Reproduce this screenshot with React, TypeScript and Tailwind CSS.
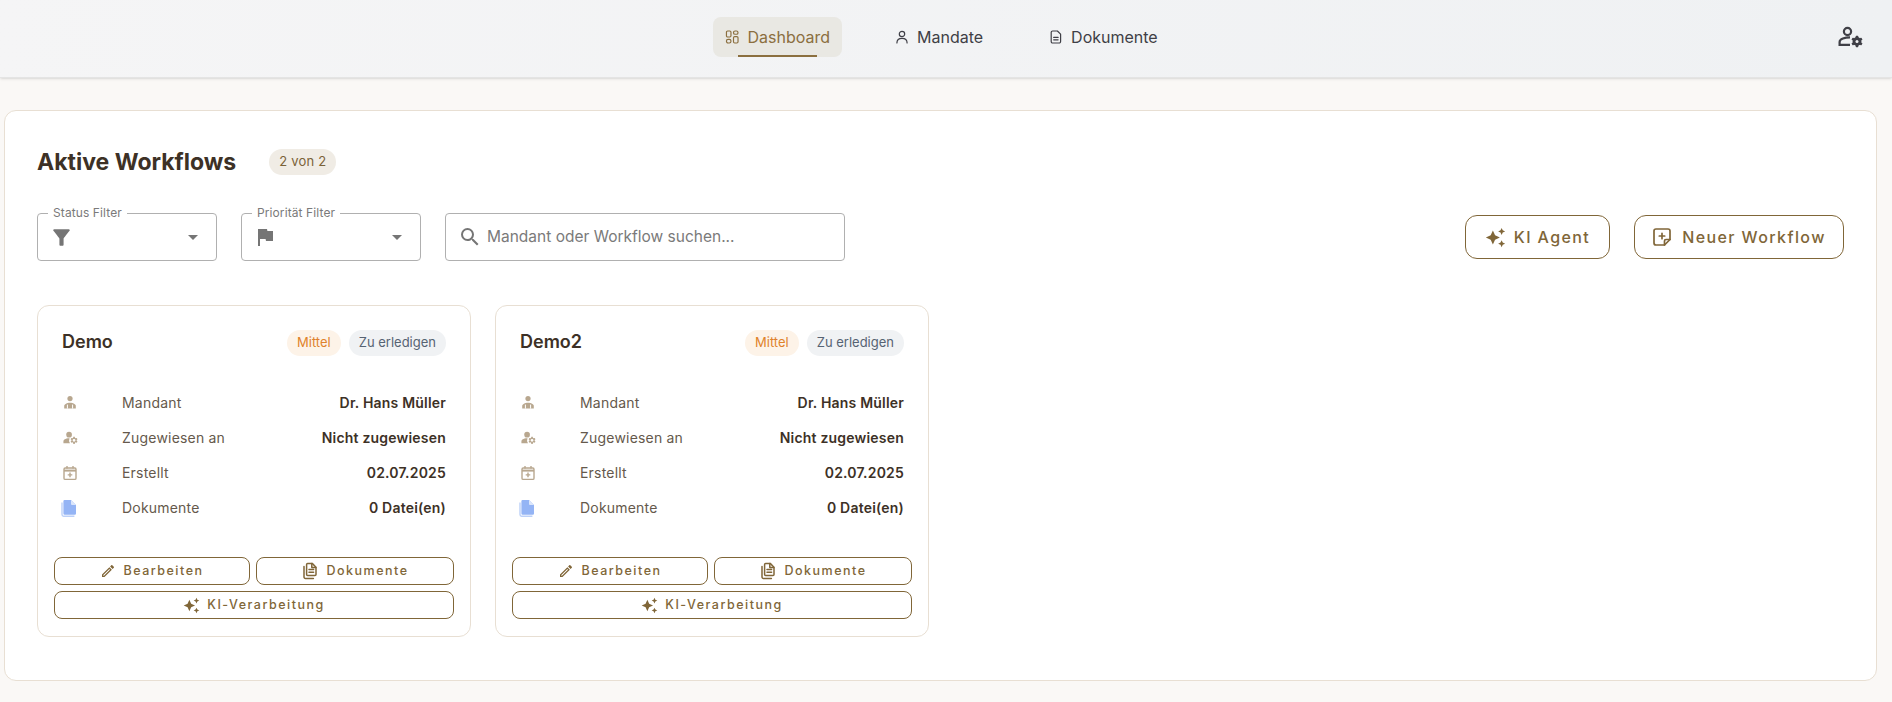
import React from "react";
import {
  MdArrowDropDown,
  MdAutoAwesome,
  MdFilterAlt,
  MdFlag,
  MdManageAccounts,
  MdOutlineEdit,
  MdSearch,
} from "react-icons/md";

function DashboardIcon() {
  return (
    <svg width="16" height="16" viewBox="0 0 16 16" fill="none" stroke="currentColor" strokeWidth="1.3">
      <rect x="1.6" y="1.4" width="5" height="6.6" rx="1.3" />
      <rect x="9.4" y="1.4" width="5" height="3.6" rx="1.8" />
      <rect x="1.6" y="10.6" width="5" height="4" rx="1.8" />
      <rect x="9.4" y="7.6" width="5" height="7" rx="1.3" />
    </svg>
  );
}

function PersonIcon() {
  return (
    <svg width="14" height="14" viewBox="0 0 14 14" fill="none" stroke="currentColor" strokeWidth="1.2" strokeLinecap="round">
      <circle cx="7" cy="4" r="2.7" />
      <path d="M1.9 13c0-3 2.2-4.6 5.1-4.6s5.1 1.6 5.1 4.6" />
    </svg>
  );
}

function DocIcon() {
  return (
    <svg width="14" height="14" viewBox="0 0 14 14" fill="none" stroke="currentColor" strokeWidth="1.2" strokeLinejoin="round" strokeLinecap="round">
      <path d="M3.6 1H8.4L11.6 4.2V11.6A1.4 1.4 0 0 1 10.2 13H3.6A1.4 1.4 0 0 1 2.2 11.6V2.4A1.4 1.4 0 0 1 3.6 1Z" />
      <path d="M4.7 7.4H9.1M4.7 9.8H9.1" />
    </svg>
  );
}

function AccountGearIcon() {
  return (
    <svg width="26" height="22" viewBox="0 0 26 22" className="ml-auto mr-[28px] text-[#3f3f46]">
      <circle cx="9.5" cy="5.5" r="3.6" fill="none" stroke="currentColor" strokeWidth="2.2" />
      <path d="M12 11.4C7 11.4 1.6 12.8 1.6 16V18.8H12" fill="none" stroke="currentColor" strokeWidth="2.2" />
      <g fill="currentColor">
        <circle cx="19" cy="15.5" r="4.4" />
        <rect x="17.7" y="9.8" width="2.6" height="11.4" rx="0.6" />
        <rect x="17.7" y="9.8" width="2.6" height="11.4" rx="0.6" transform="rotate(60 19 15.5)" />
        <rect x="17.7" y="9.8" width="2.6" height="11.4" rx="0.6" transform="rotate(120 19 15.5)" />
      </g>
      <circle cx="19" cy="15.5" r="1.5" fill="#f1f2f4" />
    </svg>
  );
}

function NoteAddIcon() {
  return (
    <svg width="20" height="20" viewBox="0 0 20 20" fill="none" stroke="currentColor" strokeWidth="1.7" strokeLinejoin="round" strokeLinecap="round">
      <path d="M4 2H16A2 2 0 0 1 18 4V12.5L12.5 18H4A2 2 0 0 1 2 16V4A2 2 0 0 1 4 2Z" />
      <path d="M18 12.5H14A1.5 1.5 0 0 0 12.5 14V18" />
      <path d="M10 6.3V11.7M7.3 9H12.7" />
    </svg>
  );
}

function ClientIcon() {
  return (
    <svg width="16" height="16" viewBox="0 0 16 16">
      <circle cx="8" cy="3.6" r="2.6" fill="#b8a78f" />
      <path d="M2.2 13.6V11C2.2 9.2 5 7.8 8 7.8S13.8 9.2 13.8 11V13.6Z" fill="#b8a78f" />
      <path d="M5.4 9.6V13.6M10.6 9.6V13.6" stroke="#ffffff" strokeWidth="1" />
    </svg>
  );
}

function CalendarAddIcon() {
  return (
    <svg width="16" height="16" viewBox="0 0 16 16" fill="none" stroke="#b8a78f" strokeWidth="1.4">
      <rect x="2" y="3" width="12" height="11.4" rx="1.2" />
      <path d="M2 5.6H14" strokeWidth="2" />
      <path d="M5 1V3.4M11 1V3.4" />
      <path d="M8 7.6V12.2M5.7 9.9H10.3" />
    </svg>
  );
}

function BlueDocsIcon() {
  return (
    <svg width="16" height="18" viewBox="0 0 16 18" className="-ml-px">
      <path d="M1 3.4V15.6A1.6 1.6 0 0 0 2.6 17.2H13.4" fill="none" stroke="#bcd0f8" strokeWidth="1.4" />
      <path d="M3.6 1H10L15 6V14.6A1.2 1.2 0 0 1 13.8 15.8H3.6A1.2 1.2 0 0 1 2.4 14.6V2.2A1.2 1.2 0 0 1 3.6 1Z" fill="#94b4f5" />
      <path d="M10 1V5A1 1 0 0 0 11 6H15Z" fill="#dbe6fb" />
    </svg>
  );
}

function DocsStackIcon() {
  return (
    <svg width="18" height="18" viewBox="0 0 18 18" fill="none" stroke="currentColor" strokeWidth="1.5" strokeLinejoin="round" strokeLinecap="round">
      <path d="M6.6 1.4H11.2L15 5.2V12.6A1 1 0 0 1 14 13.6H6.6A1 1 0 0 1 5.6 12.6V2.4A1 1 0 0 1 6.6 1.4Z" />
      <path d="M8 7.4H12.6M8 10.2H12.6M10.8 1.6V5.4H14.8" />
      <path d="M3 4.6V15A1.4 1.4 0 0 0 4.4 16.4H12.4" />
    </svg>
  );
}

function NavItem({ icon, label, active, className }: { icon: React.ReactNode; label: string; active?: boolean; className: string }) {
  return (
    <div
      className={`relative flex h-10 items-center gap-2 rounded-lg px-3 text-base ${
        active ? "bg-[#e9e8e3] text-[#8b6f3f]" : "text-[#3f3f46]"
      } ${className}`}
    >
      {icon}
      <span>{label}</span>
      {active && <span className="absolute bottom-0 left-[25px] h-0.5 w-[79px] bg-[#8b6f3f]" />}
    </div>
  );
}

function FilterSelect({ label, icon }: { label: string; icon: React.ReactNode }) {
  return (
    <div className="relative flex h-12 w-[180px] items-center justify-between rounded border border-[#b0b0b0] pl-[11px] pr-[11px]">
      <span className="absolute -top-[9px] left-[10px] bg-white px-[5px] text-xs leading-4 tracking-[0.1px] text-[#7a7a7a]">{label}</span>
      <span className="text-[#757575]">{icon}</span>
      <MdArrowDropDown size={24} className="text-[#757575]" />
    </div>
  );
}

function OutlineButton({ icon, label, className }: { icon: React.ReactNode; label: string; className: string }) {
  return (
    <button className={`flex h-7 items-center justify-center gap-[7px] rounded-lg border border-[#806638] text-[12.5px] font-medium tracking-[1.5px] text-[#806638] ${className}`}>
      {icon}
      {label}
    </button>
  );
}

function Row({ icon, label, value }: { icon: React.ReactNode; label: string; value: string }) {
  return (
    <div className="flex h-[35px] items-center">
      <span className="flex w-[60px] items-center">{icon}</span>
      <span className="text-sm tracking-[0.2px] text-[#65594c]">{label}</span>
      <span className="ml-auto text-sm font-semibold tracking-[0.2px] text-[#3d3126]">{value}</span>
    </div>
  );
}

function WorkflowCard({ title }: { title: string }) {
  return (
    <div className="flex h-[332px] w-[434px] flex-col rounded-xl border border-[#e8dfd3] bg-white px-4 pt-5">
      <div className="flex items-start justify-between pl-[8px] pr-2">
        <h3 className="text-lg leading-8 font-semibold text-[#3d3126]">{title}</h3>
        <div className="mt-[4px] flex gap-2">
          <span className="flex h-[26px] items-center rounded-full bg-[#fdf3e8] px-[10px] text-[13px] text-[#e0822b]">Mittel</span>
          <span className="flex h-[26px] items-center rounded-full bg-[#f0f2f4] px-[10px] text-[13px] text-[#566373]">Zu erledigen</span>
        </div>
      </div>
      <div className="mt-[27px] pl-[8px] pr-2">
        <Row icon={<ClientIcon />} label="Mandant" value="Dr. Hans Müller" />
        <Row icon={<MdManageAccounts size={17} color="#b8a78f" />} label="Zugewiesen an" value="Nicht zugewiesen" />
        <Row icon={<CalendarAddIcon />} label="Erstellt" value="02.07.2025" />
        <Row icon={<BlueDocsIcon />} label="Dokumente" value="0 Datei(en)" />
      </div>
      <div className="mt-[32px] flex gap-[6px]">
        <OutlineButton className="w-[196px]" icon={<MdOutlineEdit size={16} />} label="Bearbeiten" />
        <OutlineButton className="w-[198px]" icon={<DocsStackIcon />} label="Dokumente" />
      </div>
      <OutlineButton className="mt-[6px] w-[400px]" icon={<MdAutoAwesome size={17} />} label="KI-Verarbeitung" />
    </div>
  );
}

export default function App() {
  return (
    <div className="min-h-[702px] bg-[#faf8f6] font-['Inter',sans-serif]">
      <header className="flex h-[78px] items-center border-b border-[#e4e4e4] bg-gradient-to-r from-[#f5f5f6] to-[#eff1f3] pb-1 shadow-sm">
        <nav className="ml-[713px] flex items-center">
          <NavItem active icon={<DashboardIcon />} label="Dashboard" className="w-[129px]" />
          <NavItem icon={<PersonIcon />} label="Mandate" className="ml-[41px]" />
          <NavItem icon={<DocIcon />} label="Dokumente" className="ml-[42px]" />
        </nav>
        <AccountGearIcon />
      </header>
      <main className="pt-8 pr-[15px] pb-5 pl-1">
        <section className="h-[571px] rounded-xl border border-[#e8dfd3] bg-white px-8 pt-[41px]">
          <div className="flex h-5 items-center">
            <h1 className="text-[23px] font-bold text-[#3d3126]">Aktive Workflows</h1>
            <span className="ml-[33px] flex h-[26px] items-center rounded-full bg-[#f0ece5] px-[10px] text-[13px] tracking-[0.2px] text-[#7a6238]">2 von 2</span>
          </div>
          <div className="mt-[41px] flex items-center gap-6">
            <FilterSelect label="Status Filter" icon={<MdFilterAlt size={25} />} />
            <FilterSelect label="Priorität Filter" icon={<MdFlag size={24} />} />
            <div className="flex h-12 w-[400px] items-center gap-[5px] rounded border border-[#b0b0b0] px-3 text-[15.5px] text-[#7a7a7a]">
              <MdSearch size={24} className="text-[#757575]" />
              <span>Mandant oder Workflow suchen...</span>
            </div>
            <button className="ml-auto flex h-11 w-[145px] items-center justify-center gap-2 rounded-xl border border-[#806638] text-base font-medium tracking-[1.4px] text-[#806638]">
              <MdAutoAwesome size={21} />
              KI Agent
            </button>
            <button className="flex h-11 w-[210px] items-center justify-center gap-[10px] rounded-xl border border-[#806638] text-base font-medium tracking-[1.4px] text-[#806638]">
              <NoteAddIcon />
              Neuer Workflow
            </button>
          </div>
          <div className="mt-[44px] flex gap-6">
            <WorkflowCard title="Demo" />
            <WorkflowCard title="Demo2" />
          </div>
        </section>
      </main>
    </div>
  );
}
